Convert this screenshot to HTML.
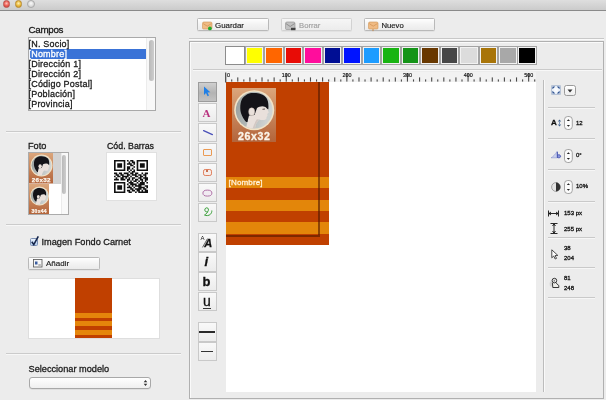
<!DOCTYPE html>
<html><head><meta charset="utf-8">
<style>
*{margin:0;padding:0;box-sizing:border-box}
html,body{width:606px;height:400px;overflow:hidden;background:#ececec;will-change:transform;font-family:"Liberation Sans",sans-serif;color:#1a1a1a}
.a{position:absolute}
.t{position:absolute;white-space:nowrap;line-height:1;-webkit-text-stroke:0.28px currentColor}
.sep{position:absolute;height:2px;border-top:1px solid #cbcbcb;border-bottom:1px solid #f7f7f7}
.btn{position:absolute;border:1px solid #b9b9b9;border-radius:1.5px;background:linear-gradient(#fefefe,#f3f3f3 50%,#ebebeb);box-shadow:0 0.5px 0 #d8d8d8}
.tool{position:absolute;left:197.5px;width:19.5px;height:19.5px;border:1px solid #c9c9c9;background:linear-gradient(#f9f9f9,#ececec)}
.sw{position:absolute;top:46px;width:19.5px;height:19px;border:1px solid #a3a3a3;box-shadow:inset 0 0 0 1px #f2f2f2}
.rsep{position:absolute;left:548px;width:47px;height:2px;border-top:1px solid #c9c9c9;border-bottom:1px solid #f6f6f6}
.step{position:absolute;width:8px;height:13px;border:1px solid #9e9e9e;border-radius:4px;background:#fbfbfb}
.sm{font-size:6px;color:#111;-webkit-text-stroke:0.3px currentColor}
</style></head><body>
<!-- title bar -->
<div class="a" style="left:0;top:0;width:606px;height:11px;background:linear-gradient(#dedede,#cbcbcb);border-bottom:1px solid #8a8a8a"></div>
<div class="a" style="left:2.5px;top:0.2px;width:7.8px;height:7.8px;border-radius:50%;border:0.6px solid #b8504a;background:radial-gradient(circle at 50% 40%,#ffc0b8,#ea5a50 55%,#c8403a)"></div>
<div class="a" style="left:14.5px;top:0.2px;width:7.8px;height:7.8px;border-radius:50%;border:0.6px solid #b88a30;background:radial-gradient(circle at 50% 40%,#fff0b0,#e8b83a 55%,#c89020)"></div>
<div class="a" style="left:26.8px;top:0.2px;width:7.8px;height:7.8px;border-radius:50%;border:0.6px solid #a8a8a8;background:radial-gradient(circle at 50% 40%,#fafafa,#dcdcdc 55%,#c6c6c6)"></div>

<!-- LEFT PANEL -->
<div class="t" style="left:28.6px;top:25.4px;font-size:9.8px;letter-spacing:-0.32px">Campos</div>
<div class="a" style="left:28px;top:37px;width:128px;height:74px;border:1px solid #a9a9a9;background:#fff;overflow:hidden">
  <div class="a" style="left:0;top:11px;width:117px;height:10px;background:#3a73d7"></div>
  <div class="t" style="left:-0.5px;top:0.6px;font-size:9px;line-height:10px;letter-spacing:0.2px">[N. Socio]<br><span style="color:#fff">[Nombre]</span><br>[Dirección 1]<br>[Dirección 2]<br>[Código Postal]<br>[Población]<br>[Provincia]</div>
  <div class="a" style="left:117px;top:0;width:9px;height:72px;background:#f8f8f8;border-left:1px solid #ececec"></div>
  <div class="a" style="left:119.5px;top:1.5px;width:5px;height:41px;border-radius:2.5px;background:linear-gradient(90deg,#b9b9b9,#cdcdcd)"></div>
</div>
<div class="sep" style="left:6px;top:131px;width:175px"></div>

<div class="t" style="left:28px;top:141.5px;font-size:9.2px">Foto</div>
<div class="t" style="left:107px;top:141.5px;font-size:8.8px">Cód. Barras</div>
<div class="a" style="left:27.5px;top:152px;width:41.5px;height:63px;border:1px solid #ababab;background:#fff;overflow:hidden">
  <div class="a" style="left:24.5px;top:0;width:7.5px;height:30.5px;background:#d3d3d3"></div>
  <svg class="a" style="left:0;top:0" width="24.5" height="30.5" viewBox="0 0 24.5 30.5"><use href="#photo"/></svg>
  <svg class="a" style="left:0;top:30.5px" width="20.5" height="30.5" viewBox="0 0 20.5 30.5"><use href="#photo2"/></svg>
  <div class="a" style="left:32px;top:0;width:7.5px;height:63px;background:#f9f9f9;border-left:1px solid #ebebeb"></div>
  <div class="a" style="left:33.2px;top:2px;width:4.8px;height:39px;border-radius:2.4px;background:linear-gradient(90deg,#b9b9b9,#cdcdcd)"></div>
</div>
<div class="a" style="left:106px;top:152px;width:50.5px;height:49px;background:#fff;border:1px solid #e0e0e0"></div>
<svg class="a" style="left:114px;top:160px" width="34" height="33" viewBox="0 0 21 21" preserveAspectRatio="none"><path d="M0 0h1v1h-1zM1 0h1v1h-1zM2 0h1v1h-1zM3 0h1v1h-1zM4 0h1v1h-1zM5 0h1v1h-1zM6 0h1v1h-1zM8 0h1v1h-1zM10 0h1v1h-1zM11 0h1v1h-1zM14 0h1v1h-1zM15 0h1v1h-1zM16 0h1v1h-1zM17 0h1v1h-1zM18 0h1v1h-1zM19 0h1v1h-1zM20 0h1v1h-1zM0 1h1v1h-1zM6 1h1v1h-1zM9 1h1v1h-1zM11 1h1v1h-1zM12 1h1v1h-1zM14 1h1v1h-1zM20 1h1v1h-1zM0 2h1v1h-1zM2 2h1v1h-1zM3 2h1v1h-1zM4 2h1v1h-1zM6 2h1v1h-1zM8 2h1v1h-1zM9 2h1v1h-1zM10 2h1v1h-1zM12 2h1v1h-1zM14 2h1v1h-1zM16 2h1v1h-1zM17 2h1v1h-1zM18 2h1v1h-1zM20 2h1v1h-1zM0 3h1v1h-1zM2 3h1v1h-1zM3 3h1v1h-1zM4 3h1v1h-1zM6 3h1v1h-1zM10 3h1v1h-1zM11 3h1v1h-1zM14 3h1v1h-1zM16 3h1v1h-1zM17 3h1v1h-1zM18 3h1v1h-1zM20 3h1v1h-1zM0 4h1v1h-1zM2 4h1v1h-1zM3 4h1v1h-1zM4 4h1v1h-1zM6 4h1v1h-1zM8 4h1v1h-1zM9 4h1v1h-1zM12 4h1v1h-1zM14 4h1v1h-1zM16 4h1v1h-1zM17 4h1v1h-1zM18 4h1v1h-1zM20 4h1v1h-1zM0 5h1v1h-1zM6 5h1v1h-1zM8 5h1v1h-1zM9 5h1v1h-1zM11 5h1v1h-1zM14 5h1v1h-1zM20 5h1v1h-1zM0 6h1v1h-1zM1 6h1v1h-1zM2 6h1v1h-1zM3 6h1v1h-1zM4 6h1v1h-1zM5 6h1v1h-1zM6 6h1v1h-1zM8 6h1v1h-1zM10 6h1v1h-1zM12 6h1v1h-1zM14 6h1v1h-1zM15 6h1v1h-1zM16 6h1v1h-1zM17 6h1v1h-1zM18 6h1v1h-1zM19 6h1v1h-1zM20 6h1v1h-1zM9 7h1v1h-1zM11 7h1v1h-1zM12 7h1v1h-1zM0 8h1v1h-1zM1 8h1v1h-1zM3 8h1v1h-1zM4 8h1v1h-1zM6 8h1v1h-1zM7 8h1v1h-1zM8 8h1v1h-1zM10 8h1v1h-1zM11 8h1v1h-1zM13 8h1v1h-1zM14 8h1v1h-1zM17 8h1v1h-1zM19 8h1v1h-1zM20 8h1v1h-1zM1 9h1v1h-1zM2 9h1v1h-1zM4 9h1v1h-1zM5 9h1v1h-1zM8 9h1v1h-1zM9 9h1v1h-1zM11 9h1v1h-1zM12 9h1v1h-1zM13 9h1v1h-1zM15 9h1v1h-1zM16 9h1v1h-1zM18 9h1v1h-1zM19 9h1v1h-1zM0 10h1v1h-1zM2 10h1v1h-1zM3 10h1v1h-1zM5 10h1v1h-1zM6 10h1v1h-1zM7 10h1v1h-1zM8 10h1v1h-1zM10 10h1v1h-1zM13 10h1v1h-1zM14 10h1v1h-1zM16 10h1v1h-1zM17 10h1v1h-1zM19 10h1v1h-1zM1 11h1v1h-1zM4 11h1v1h-1zM5 11h1v1h-1zM7 11h1v1h-1zM9 11h1v1h-1zM11 11h1v1h-1zM12 11h1v1h-1zM15 11h1v1h-1zM16 11h1v1h-1zM18 11h1v1h-1zM19 11h1v1h-1zM20 11h1v1h-1zM0 12h1v1h-1zM1 12h1v1h-1zM2 12h1v1h-1zM4 12h1v1h-1zM5 12h1v1h-1zM6 12h1v1h-1zM8 12h1v1h-1zM9 12h1v1h-1zM11 12h1v1h-1zM13 12h1v1h-1zM14 12h1v1h-1zM16 12h1v1h-1zM17 12h1v1h-1zM19 12h1v1h-1zM20 12h1v1h-1zM8 13h1v1h-1zM10 13h1v1h-1zM12 13h1v1h-1zM13 13h1v1h-1zM15 13h1v1h-1zM17 13h1v1h-1zM19 13h1v1h-1zM0 14h1v1h-1zM1 14h1v1h-1zM2 14h1v1h-1zM3 14h1v1h-1zM4 14h1v1h-1zM5 14h1v1h-1zM6 14h1v1h-1zM9 14h1v1h-1zM10 14h1v1h-1zM11 14h1v1h-1zM14 14h1v1h-1zM16 14h1v1h-1zM17 14h1v1h-1zM18 14h1v1h-1zM20 14h1v1h-1zM0 15h1v1h-1zM6 15h1v1h-1zM8 15h1v1h-1zM10 15h1v1h-1zM11 15h1v1h-1zM12 15h1v1h-1zM13 15h1v1h-1zM15 15h1v1h-1zM16 15h1v1h-1zM17 15h1v1h-1zM18 15h1v1h-1zM0 16h1v1h-1zM2 16h1v1h-1zM3 16h1v1h-1zM4 16h1v1h-1zM6 16h1v1h-1zM9 16h1v1h-1zM11 16h1v1h-1zM13 16h1v1h-1zM14 16h1v1h-1zM15 16h1v1h-1zM16 16h1v1h-1zM19 16h1v1h-1zM20 16h1v1h-1zM0 17h1v1h-1zM2 17h1v1h-1zM3 17h1v1h-1zM4 17h1v1h-1zM6 17h1v1h-1zM8 17h1v1h-1zM9 17h1v1h-1zM10 17h1v1h-1zM12 17h1v1h-1zM15 17h1v1h-1zM16 17h1v1h-1zM17 17h1v1h-1zM18 17h1v1h-1zM20 17h1v1h-1zM0 18h1v1h-1zM2 18h1v1h-1zM3 18h1v1h-1zM4 18h1v1h-1zM6 18h1v1h-1zM10 18h1v1h-1zM11 18h1v1h-1zM13 18h1v1h-1zM14 18h1v1h-1zM15 18h1v1h-1zM16 18h1v1h-1zM18 18h1v1h-1zM19 18h1v1h-1zM0 19h1v1h-1zM6 19h1v1h-1zM8 19h1v1h-1zM9 19h1v1h-1zM11 19h1v1h-1zM12 19h1v1h-1zM14 19h1v1h-1zM15 19h1v1h-1zM17 19h1v1h-1zM19 19h1v1h-1zM20 19h1v1h-1zM0 20h1v1h-1zM1 20h1v1h-1zM2 20h1v1h-1zM3 20h1v1h-1zM4 20h1v1h-1zM5 20h1v1h-1zM6 20h1v1h-1zM9 20h1v1h-1zM10 20h1v1h-1zM13 20h1v1h-1zM15 20h1v1h-1zM16 20h1v1h-1zM17 20h1v1h-1zM18 20h1v1h-1zM19 20h1v1h-1zM20 20h1v1h-1z" fill="#111"/></svg>

<div class="sep" style="left:6px;top:223.5px;width:175px"></div>
<div class="a" style="left:29.8px;top:238px;width:8.5px;height:8px;border:1px solid #7c90b4;border-radius:1.5px;background:linear-gradient(#eaf2fc,#b2cdef)"></div>
<svg class="a" style="left:30px;top:234.5px" width="11" height="12" viewBox="0 0 11 12"><path d="M1.8 6.8 L3.8 9.6 L8.3 1.4" fill="none" stroke="#15254a" stroke-width="1.6"/></svg>
<div class="t" style="left:41.5px;top:237.5px;font-size:9.2px">Imagen Fondo Carnet</div>
<div class="btn" style="left:28px;top:256.5px;width:72px;height:13.5px"></div>
<svg class="a" style="left:32.5px;top:258.5px" width="10" height="9" viewBox="0 0 10 9"><rect x="0.5" y="0.5" width="8.5" height="7.5" fill="#f6f6f6" stroke="#555" stroke-width="0.8"/><rect x="2" y="2.5" width="2.5" height="3" fill="#3c5ea0"/><rect x="5.3" y="5.5" width="2.5" height="1" fill="#777"/></svg>
<div class="t" style="left:46px;top:259.5px;-webkit-text-stroke:0.15px;font-size:8px">Añadir</div>
<div class="a" style="left:27.5px;top:277.5px;width:132.5px;height:61.5px;background:#fff;border:1px solid #dedede"></div>
<div class="a" style="left:74.5px;top:278px;width:37.5px;height:60px;background:#c04000"></div>
<div class="a" style="left:74.5px;top:313px;width:37.5px;height:5px;background:#e5860b"></div>
<div class="a" style="left:74.5px;top:321px;width:37.5px;height:5px;background:#e5860b"></div>
<div class="a" style="left:74.5px;top:329.5px;width:37.5px;height:5px;background:#e5860b"></div>

<div class="sep" style="left:6px;top:352.5px;width:175px"></div>
<div class="t" style="left:28.5px;top:364.5px;font-size:9.2px">Seleccionar modelo</div>
<div class="a" style="left:28.5px;top:377px;width:122px;height:12px;border:1px solid #a8a8a8;border-radius:3px;background:linear-gradient(#fefefe,#efefef);box-shadow:0 0.5px 0 #d0d0d0"></div>
<svg class="a" style="left:142.5px;top:379px" width="5" height="8" viewBox="0 0 5 8"><path d="M0.7 3.2 L2.5 1 L4.3 3.2 Z M0.7 4.8 L2.5 7 L4.3 4.8 Z" fill="#333"/></svg>

<!-- TOP BUTTONS -->
<div class="btn" style="left:197px;top:18.4px;width:72px;height:13px"></div>
<div class="t" style="left:215px;top:21.8px;-webkit-text-stroke:0.15px;font-size:7.9px">Guardar</div>
<div class="btn" style="left:280.5px;top:18.4px;width:71.5px;height:13px;border-color:#d2d2d2;background:linear-gradient(#f6f6f6,#ececec)"></div>
<div class="t" style="left:299px;top:21.8px;-webkit-text-stroke:0.15px;font-size:7.7px;color:#a0a0a0">Borrar</div>
<div class="btn" style="left:363.5px;top:18.4px;width:71px;height:13px"></div>
<div class="t" style="left:381.5px;top:21.8px;-webkit-text-stroke:0.15px;font-size:7.7px">Nuevo</div>
<!-- button icons -->
<svg class="a" style="left:201.5px;top:20.5px" width="12" height="11" viewBox="0 0 12 11"><path d="M0.5 2.3 Q0.5 1 2 1 L8.5 1 Q10 1 10 2.3 L10 7 Q10 8 9 8 L1.5 8 Q0.5 8 0.5 7Z" fill="#f0bb84" stroke="#cf9558" stroke-width="0.6"/><path d="M1.2 2.6 L5.2 5.2 L9.4 2.6" fill="none" stroke="#c98a4a" stroke-width="0.6"/><circle cx="7.9" cy="7.4" r="1.9" fill="#22a82c"/></svg>
<svg class="a" style="left:285px;top:20.5px" width="12" height="11" viewBox="0 0 12 11"><path d="M0.5 2.5 Q0.5 1 2 1 L8.5 1 Q10 1 10 2.5 L10 7.5 Q10 8.5 9 8.5 L1.5 8.5 Q0.5 8.5 0.5 7.5Z" fill="#c2c2c2" stroke="#8e8e8e" stroke-width="0.6"/><path d="M0.8 2.5 L5.2 5.5 L9.7 2.5" fill="none" stroke="#7a7a7a" stroke-width="0.7"/><rect x="6" y="6.8" width="4.5" height="2.4" fill="#444"/></svg>
<svg class="a" style="left:367.5px;top:20.5px" width="12" height="12" viewBox="0 0 12 12"><path d="M0.5 2.3 Q0.5 1 2 1 L8.5 1 Q10 1 10 2.3 L10 7 Q10 8 9 8 L1.5 8 Q0.5 8 0.5 7Z" fill="#f0bb84" stroke="#cf9558" stroke-width="0.6"/><path d="M1.2 2.6 L5.2 5.2 L9.4 2.6" fill="none" stroke="#c98a4a" stroke-width="0.6"/><path d="M4 8.5 L5 10.5 L6 8.5Z" fill="#c18548"/></svg>

<!-- FRAME -->
<div class="a" style="left:189px;top:38px;width:415px;height:2px;border-top:1px solid #c8c8c8;border-bottom:1px solid #fafafa"></div>
<div class="a" style="left:189px;top:40.5px;width:415px;height:358.5px;border:1px solid #b0b0b0;background:#ececec;box-shadow:inset 1px 1px 0 #fafafa"></div>
<div class="a" style="left:193px;top:69px;width:409px;height:2px;border-top:1px solid #cacaca;border-bottom:1px solid #f8f8f8"></div>

<!-- swatches -->
<div class="sw" style="left:225px;background:#fff;border:1.5px solid #8c8c8c;box-shadow:none"></div>
<div class="sw" style="left:244.7px;background:#ffff00"></div>
<div class="sw" style="left:264.2px;background:#ff6600"></div>
<div class="sw" style="left:283.7px;background:#e80c06"></div>
<div class="sw" style="left:303.2px;background:#ff0d9c"></div>
<div class="sw" style="left:322.7px;background:#000e94"></div>
<div class="sw" style="left:342.2px;background:#0014ff"></div>
<div class="sw" style="left:361.7px;background:#1c9cff"></div>
<div class="sw" style="left:381.2px;background:#18b412"></div>
<div class="sw" style="left:400.7px;background:#149418"></div>
<div class="sw" style="left:420.2px;background:#683800"></div>
<div class="sw" style="left:439.7px;background:#474747"></div>
<div class="sw" style="left:459.2px;background:#dcdcdc"></div>
<div class="sw" style="left:478.7px;background:#a87408"></div>
<div class="sw" style="left:498.2px;background:#a8a8a8"></div>
<div class="sw" style="left:517.2px;background:#000"></div>

<!-- ruler -->
<div class="a" style="left:225px;top:72px;width:311px;height:10px;background:#f2f2f2"></div>
<svg class="a" style="left:225px;top:71.5px" width="312" height="11" viewBox="0 0 312 11">
<rect x="0.1" y="0.5" width="1.2" height="10" fill="#444"/>
<rect x="6.16" y="7.40" width="1.1" height="2.20" fill="#4a4a4a"/>
<rect x="12.22" y="5.40" width="1.1" height="4.20" fill="#4a4a4a"/>
<rect x="18.28" y="7.40" width="1.1" height="2.20" fill="#4a4a4a"/>
<rect x="24.34" y="5.40" width="1.1" height="4.20" fill="#4a4a4a"/>
<rect x="30.40" y="7.40" width="1.1" height="2.20" fill="#4a4a4a"/>
<rect x="36.46" y="5.40" width="1.1" height="4.20" fill="#4a4a4a"/>
<rect x="42.52" y="7.40" width="1.1" height="2.20" fill="#4a4a4a"/>
<rect x="48.58" y="5.40" width="1.1" height="4.20" fill="#4a4a4a"/>
<rect x="54.64" y="7.40" width="1.1" height="2.20" fill="#4a4a4a"/>
<rect x="60.70" y="1.10" width="1.1" height="8.50" fill="#4a4a4a"/>
<text x="61.35" y="4.9" font-family="Liberation Sans" font-size="5.4" fill="#111" text-anchor="middle" stroke="#111" stroke-width="0.15">100</text>
<rect x="66.76" y="7.40" width="1.1" height="2.20" fill="#4a4a4a"/>
<rect x="72.82" y="5.40" width="1.1" height="4.20" fill="#4a4a4a"/>
<rect x="78.88" y="7.40" width="1.1" height="2.20" fill="#4a4a4a"/>
<rect x="84.94" y="5.40" width="1.1" height="4.20" fill="#4a4a4a"/>
<rect x="91.00" y="7.40" width="1.1" height="2.20" fill="#4a4a4a"/>
<rect x="97.06" y="5.40" width="1.1" height="4.20" fill="#4a4a4a"/>
<rect x="103.12" y="7.40" width="1.1" height="2.20" fill="#4a4a4a"/>
<rect x="109.18" y="5.40" width="1.1" height="4.20" fill="#4a4a4a"/>
<rect x="115.24" y="7.40" width="1.1" height="2.20" fill="#4a4a4a"/>
<rect x="121.30" y="1.10" width="1.1" height="8.50" fill="#4a4a4a"/>
<text x="121.95" y="4.9" font-family="Liberation Sans" font-size="5.4" fill="#111" text-anchor="middle" stroke="#111" stroke-width="0.15">200</text>
<rect x="127.36" y="7.40" width="1.1" height="2.20" fill="#4a4a4a"/>
<rect x="133.42" y="5.40" width="1.1" height="4.20" fill="#4a4a4a"/>
<rect x="139.48" y="7.40" width="1.1" height="2.20" fill="#4a4a4a"/>
<rect x="145.54" y="5.40" width="1.1" height="4.20" fill="#4a4a4a"/>
<rect x="151.60" y="7.40" width="1.1" height="2.20" fill="#4a4a4a"/>
<rect x="157.66" y="5.40" width="1.1" height="4.20" fill="#4a4a4a"/>
<rect x="163.72" y="7.40" width="1.1" height="2.20" fill="#4a4a4a"/>
<rect x="169.78" y="5.40" width="1.1" height="4.20" fill="#4a4a4a"/>
<rect x="175.84" y="7.40" width="1.1" height="2.20" fill="#4a4a4a"/>
<rect x="181.90" y="1.10" width="1.1" height="8.50" fill="#4a4a4a"/>
<text x="182.55" y="4.9" font-family="Liberation Sans" font-size="5.4" fill="#111" text-anchor="middle" stroke="#111" stroke-width="0.15">300</text>
<rect x="187.96" y="7.40" width="1.1" height="2.20" fill="#4a4a4a"/>
<rect x="194.02" y="5.40" width="1.1" height="4.20" fill="#4a4a4a"/>
<rect x="200.08" y="7.40" width="1.1" height="2.20" fill="#4a4a4a"/>
<rect x="206.14" y="5.40" width="1.1" height="4.20" fill="#4a4a4a"/>
<rect x="212.20" y="7.40" width="1.1" height="2.20" fill="#4a4a4a"/>
<rect x="218.26" y="5.40" width="1.1" height="4.20" fill="#4a4a4a"/>
<rect x="224.32" y="7.40" width="1.1" height="2.20" fill="#4a4a4a"/>
<rect x="230.38" y="5.40" width="1.1" height="4.20" fill="#4a4a4a"/>
<rect x="236.44" y="7.40" width="1.1" height="2.20" fill="#4a4a4a"/>
<rect x="242.50" y="1.10" width="1.1" height="8.50" fill="#4a4a4a"/>
<text x="243.15" y="4.9" font-family="Liberation Sans" font-size="5.4" fill="#111" text-anchor="middle" stroke="#111" stroke-width="0.15">400</text>
<rect x="248.56" y="7.40" width="1.1" height="2.20" fill="#4a4a4a"/>
<rect x="254.62" y="5.40" width="1.1" height="4.20" fill="#4a4a4a"/>
<rect x="260.68" y="7.40" width="1.1" height="2.20" fill="#4a4a4a"/>
<rect x="266.74" y="5.40" width="1.1" height="4.20" fill="#4a4a4a"/>
<rect x="272.80" y="7.40" width="1.1" height="2.20" fill="#4a4a4a"/>
<rect x="278.86" y="5.40" width="1.1" height="4.20" fill="#4a4a4a"/>
<rect x="284.92" y="7.40" width="1.1" height="2.20" fill="#4a4a4a"/>
<rect x="290.98" y="5.40" width="1.1" height="4.20" fill="#4a4a4a"/>
<rect x="297.04" y="7.40" width="1.1" height="2.20" fill="#4a4a4a"/>
<rect x="303.10" y="1.10" width="1.1" height="8.50" fill="#4a4a4a"/>
<text x="303.75" y="4.9" font-family="Liberation Sans" font-size="5.4" fill="#111" text-anchor="middle" stroke="#111" stroke-width="0.15">500</text>
<rect x="309.16" y="7.40" width="1.1" height="2.20" fill="#4a4a4a"/>
<text x="2.1" y="4.9" font-family="Liberation Sans" font-size="5.4" fill="#111" stroke="#111" stroke-width="0.15">0</text>
</svg>

<!-- canvas -->
<div class="a" style="left:226px;top:82px;width:310px;height:310px;background:#fff"></div>
<div class="a" style="left:226px;top:81.5px;width:103px;height:163px;background:#c04000"></div>
<div class="a" style="left:226px;top:177px;width:103px;height:11.4px;background:#e3860a"></div>
<div class="a" style="left:226px;top:199.7px;width:103px;height:11.4px;background:#e3860a"></div>
<div class="a" style="left:226px;top:222.4px;width:103px;height:11.4px;background:#e3860a"></div>
<div class="a" style="left:317.9px;top:81.5px;width:1.8px;height:155.4px;background:rgba(80,25,0,0.6)"></div>
<div class="a" style="left:226px;top:235px;width:91.9px;height:1.9px;background:rgba(80,25,0,0.6)"></div>
<svg class="a" style="left:232px;top:88px" width="44" height="54" viewBox="0 0 44 54"><use href="#photoBig"/></svg>
<div class="t" style="left:228.6px;top:178.8px;font-size:8px;letter-spacing:0.15px;color:#fff2da">[Nombre]</div>

<!-- tools -->
<div class="tool" style="top:82px;background:linear-gradient(#cfcfcf,#b3b3b3 55%,#c2c2c2);border-color:#9c9c9c"></div>
<div class="tool" style="top:102.5px"></div>
<div class="tool" style="top:122.5px"></div>
<div class="tool" style="top:142.5px"></div>
<div class="tool" style="top:162.5px"></div>
<div class="tool" style="top:182.5px"></div>
<div class="tool" style="top:202.5px"></div>
<div class="tool" style="top:232.5px"></div>
<div class="tool" style="top:252.3px"></div>
<div class="tool" style="top:271.8px"></div>
<div class="tool" style="top:291.8px"></div>
<div class="tool" style="top:322px"></div>
<div class="tool" style="top:341.5px"></div>
<!-- tool icons -->
<svg class="a" style="left:203px;top:86px" width="8" height="11" viewBox="0 0 8 11"><path d="M1 0.5 L1 9 L3 7 L4.6 10.3 L6 9.6 L4.5 6.4 L7.3 6.2 Z" fill="#1f7fe6"/></svg>
<div class="t" style="left:202.5px;top:107.5px;font-size:11px;font-family:'Liberation Serif',serif;font-weight:bold;color:#b8307e;-webkit-text-stroke:0">A</div>
<svg class="a" style="left:201px;top:125px" width="14" height="12" viewBox="0 0 14 12"><path d="M2.6 5.6 L11.4 9.6" stroke="#4a50b8" stroke-width="1.3" stroke-linecap="round"/></svg>
<div class="a" style="left:202.7px;top:148.8px;width:9.5px;height:7px;border:1.1px solid #eb9a52;border-radius:1px;background:#eef0f4"></div>
<div class="a" style="left:202.7px;top:168.5px;width:9px;height:7px;border:1px solid #e0805e;border-radius:2.2px;background:#f6ece8"></div><div class="a" style="left:206.2px;top:170px;width:2px;height:2px;border:0.6px solid #c87050"></div>
<svg class="a" style="left:201px;top:187.5px" width="12" height="10" viewBox="0 0 12 10"><ellipse cx="6.4" cy="5.1" rx="4.5" ry="3" fill="#f1ebf2" stroke="#a8649f" stroke-width="0.9"/></svg>
<svg class="a" style="left:201px;top:205px" width="13" height="13" viewBox="0 0 13 13"><path d="M6.8 6.5 C8 5 7.5 2.8 5.8 2.8 C4 2.8 3.2 5 4.3 6.3 C5.2 7.3 6.8 6.8 6.8 6.5 C6.2 8.5 4.2 9.5 3.5 10 C5 11 8 10.8 9.5 9.2 C10.5 8.2 11 6.5 10.8 5.5" fill="none" stroke="#3aa03a" stroke-width="1"/></svg>
<!-- text tools -->
<div class="t" style="left:200.4px;top:235.3px;font-size:6px;color:#111;-webkit-text-stroke:0">A</div>
<svg class="a" style="left:201px;top:237px" width="8" height="12" viewBox="0 0 8 12"><path d="M1.5 10.4 L6.5 1.6" stroke="#222" stroke-width="0.7"/></svg>
<div class="t" style="left:204.3px;top:237.8px;font-size:11px;font-weight:bold;font-style:italic;color:#111">A</div>
<div class="t" style="left:204.6px;top:255.1px;font-size:13px;font-weight:bold;font-style:italic;color:#111">i</div>
<div class="t" style="left:202.6px;top:274.5px;font-size:13px;font-weight:bold;color:#111">b</div>
<div class="t" style="left:203.1px;top:294.3px;font-size:14px;color:#111">u</div>
<div class="a" style="left:203px;top:307.8px;width:8.3px;height:1px;background:#333"></div>
<div class="a" style="left:199px;top:331px;width:16px;height:1.7px;background:#2a2a2a"></div>
<div class="a" style="left:201px;top:351px;width:12px;height:1.2px;background:#333"></div>

<!-- right panel -->
<div class="a" style="left:543px;top:80px;width:2px;height:312px;border-left:1px solid #bcbcbc;border-right:1px solid #f9f9f9"></div>
<svg class="a" style="left:550.7px;top:85.2px" width="10" height="10" viewBox="0 0 10 10"><rect x="0.4" y="0.4" width="9.2" height="9.2" rx="0.8" fill="#eef3fa" stroke="#9fb0c8" stroke-width="0.8"/><path d="M3.4 3.4 L6.6 6.6 M6.6 3.4 L3.4 6.6" stroke="#fafcff" stroke-width="1.6"/><path d="M1.4 1.4 h2.9 l-2.9 2.9z M8.6 1.4 h-2.9 l2.9 2.9z M1.4 8.6 h2.9 l-2.9 -2.9z M8.6 8.6 h-2.9 l2.9 -2.9z" fill="#2b4f8e"/></svg>
<div class="a" style="left:564px;top:85px;width:11.5px;height:11px;border:1px solid #9a9a9a;border-radius:2.5px;background:linear-gradient(#fff,#eee)"></div>
<svg class="a" style="left:567px;top:88.5px" width="6" height="4" viewBox="0 0 6 4"><path d="M0.5 0.5 L5.5 0.5 L3 3.5Z" fill="#333"/></svg>
<div class="rsep" style="top:107px"></div>
<div class="t" style="left:551px;top:118.6px;font-size:8px;font-weight:bold;color:#111">A</div>
<svg class="a" style="left:557px;top:119px" width="5" height="8" viewBox="0 0 5 8"><path d="M2.5 0.4 L4.2 2.6 L0.8 2.6Z M2.5 7.6 L4.2 5.4 L0.8 5.4Z" fill="#3e5f8c"/><rect x="2" y="2.4" width="1" height="3.2" fill="#7e96b8"/></svg>
<svg class="a" style="left:564px;top:116px" width="9" height="14" viewBox="0 0 9 14"><rect x="0.5" y="0.5" width="7.8" height="13" rx="3.2" fill="#fbfbfb" stroke="#8f8f8f" stroke-width="0.8"/><path d="M2.8 5 L4.4 3.2 L6 5Z M2.8 9 L4.4 10.8 L6 9Z" fill="#222"/></svg>
<div class="t sm" style="left:576px;top:119.7px">12</div>
<div class="rsep" style="top:138px"></div>
<svg class="a" style="left:550px;top:150px" width="12" height="9" viewBox="0 0 12 9"><path d="M1 7.8 C3 7 5.5 4 7 1.5 L7.3 7.8 Z" fill="#c9d0ec" stroke="#7f88c8" stroke-width="0.5"/><path d="M7.4 1.8 V7.8 M7.4 5.2 C8.8 4.2 10.6 5 10.6 6.4 C10.6 7.6 9 8.1 7.4 7.5" fill="#8a95dc" stroke="#3f4fae" stroke-width="0.9"/></svg>
<svg class="a" style="left:564px;top:148.5px" width="9" height="14" viewBox="0 0 9 14"><rect x="0.5" y="0.5" width="7.8" height="13" rx="3.2" fill="#fbfbfb" stroke="#8f8f8f" stroke-width="0.8"/><path d="M2.8 5 L4.4 3.2 L6 5Z M2.8 9 L4.4 10.8 L6 9Z" fill="#222"/></svg>
<div class="t sm" style="left:576px;top:151.7px">0°</div>
<div class="rsep" style="top:169px"></div>
<svg class="a" style="left:551px;top:181.5px" width="10" height="10" viewBox="0 0 10 10"><circle cx="5" cy="5" r="4.4" fill="#e4e4e4" stroke="#777" stroke-width="0.6"/><path d="M5 0.6 A4.4 4.4 0 0 1 5 9.4 Z" fill="#333"/></svg>
<svg class="a" style="left:564px;top:180px" width="9" height="14" viewBox="0 0 9 14"><rect x="0.5" y="0.5" width="7.8" height="13" rx="3.2" fill="#fbfbfb" stroke="#8f8f8f" stroke-width="0.8"/><path d="M2.8 5 L4.4 3.2 L6 5Z M2.8 9 L4.4 10.8 L6 9Z" fill="#222"/></svg>
<div class="t sm" style="left:576px;top:182.7px">10%</div>
<div class="rsep" style="top:201px"></div>
<svg class="a" style="left:548px;top:210px" width="11" height="7" viewBox="0 0 11 7"><path d="M0.5 0.5 V6.5 M10.5 0.5 V6.5 M1 3.5 H10 M1 3.5 L3 2 M1 3.5 L3 5 M10 3.5 L8 2 M10 3.5 L8 5" fill="none" stroke="#111" stroke-width="0.9"/></svg>
<div class="t sm" style="left:564px;top:210.2px">153 px</div>
<svg class="a" style="left:549.5px;top:223px" width="8" height="11" viewBox="0 0 8 11"><path d="M0.5 0.5 H7.5 M0.5 10.5 H7.5 M4 1 V10 M4 1 L2.5 3 M4 1 L5.5 3 M4 10 L2.5 8 M4 10 L5.5 8" fill="none" stroke="#111" stroke-width="0.9"/></svg>
<div class="t sm" style="left:564px;top:225.7px">255 px</div>
<div class="rsep" style="top:237px"></div>
<svg class="a" style="left:550.5px;top:248.5px" width="8" height="11" viewBox="0 0 8 11"><path d="M0.8 0.8 L0.8 8.8 L2.7 7 L4.2 10 L5.5 9.4 L4.1 6.5 L6.8 6.4 Z" fill="#fff" stroke="#222" stroke-width="0.8" stroke-linejoin="round"/></svg>
<div class="t sm" style="left:564px;top:245.2px">38</div>
<div class="t sm" style="left:564px;top:255.2px">204</div>
<div class="rsep" style="top:267px"></div>
<svg class="a" style="left:548px;top:276px" width="12" height="13" viewBox="0 0 12 13"><ellipse cx="3" cy="8" rx="1.4" ry="2.8" fill="#d4d4d4"/><path d="M4.4 6.8 L4.8 11.5 L10.8 11.5 L10.8 9.5 L8.6 7.6 L8.2 6.6" fill="#eeeeea" stroke="#222" stroke-width="0.9"/><circle cx="6.4" cy="4.6" r="2.3" fill="#efefef" stroke="#222" stroke-width="0.9"/><rect x="5.6" y="3.8" width="1.4" height="1.8" fill="#888"/></svg>
<div class="t sm" style="left:564px;top:275.2px">81</div>
<div class="t sm" style="left:564px;top:285.2px">248</div>
<div class="rsep" style="top:297px"></div>

<!-- defs -->
<svg width="0" height="0" style="position:absolute">
<defs>
 <linearGradient id="pg" x1="0" y1="0" x2="0" y2="1"><stop offset="0" stop-color="#dba67c"/><stop offset="1" stop-color="#b3643a"/></linearGradient>
 <linearGradient id="cg" x1="0" y1="0" x2="1" y2="0.3"><stop offset="0" stop-color="#949c9b"/><stop offset="1" stop-color="#cfd3d2"/></linearGradient>
 <clipPath id="cc1"><circle cx="22.2" cy="22.2" r="18.4"/></clipPath>
 <g id="photoBig">
  <rect x="0" y="0" width="44" height="54" fill="url(#pg)"/>
  <circle cx="22.2" cy="22.2" r="20" fill="#f1e2c6"/>
  <circle cx="22.2" cy="22.2" r="18.4" fill="url(#cg)"/>
  <g clip-path="url(#cc1)">
   <path d="M25 20 C27 18.8 30 17.5 33.5 19 L35.5 21 C36 22.5 36.3 23.5 36.8 24.4 L35.2 26 L35.6 27.5 L34.6 29 L34.4 31 L32.5 32 C30.5 32.2 28.5 32 27 31.5 L24 36 L22 44 L13 44 L15.5 34 C16 31 16.5 29 17 27.5 L22.5 27 Z" fill="#e9e0db"/><path d="M27 31.5 L24 36 L22 44 L19.5 44 C20.5 40 22.5 35 24.8 31.3 Z" fill="#d2c8c3"/><path d="M30.5 21.3 L33 21" stroke="#3a3030" stroke-width="0.8"/>
   <path d="M14.3 34.1 C11.5 31 8.5 26 8.3 20.9 C8 14 10 9.5 13.2 7.7 C16 5.5 18.5 5 20.9 5 C24 4.8 26.5 5.2 28.6 6 C31.5 7 33.5 8.5 34.6 10.2 C36 12.5 36.8 16 36.3 21.2 L35.5 21 L33.5 19 C30 17.5 27 18.8 25 20 L22.5 27 L17 27.5 C16.5 29 16 31 15.5 34 Z" fill="#141318"/>
   <ellipse cx="19.7" cy="23.7" rx="3.1" ry="3.9" fill="#e9e0da" stroke="#b8aaa2" stroke-width="0.4"/>
  </g>
  <text x="22.2" y="52.4" text-anchor="middle" font-family="Liberation Sans" font-weight="bold" font-size="10.6" fill="#fbf5ea" stroke="#fbf5ea" stroke-width="0.3" letter-spacing="0.6">26x32</text>
 </g>
 <clipPath id="cc2"><circle cx="12.5" cy="12.5" r="10"/></clipPath>
 <g id="photo">
  <rect x="0" y="0" width="24.5" height="30.5" fill="url(#pg)"/>
  <circle cx="12.5" cy="12.5" r="11" fill="#f1e2c6"/>
  <circle cx="12.5" cy="12.5" r="10" fill="url(#cg)"/>
  <g clip-path="url(#cc2)"><g transform="translate(0.44,0.44) scale(0.543)">
   <path d="M25 20 C27 18.8 30 17.5 33.5 19 L35.5 21 C36 22.5 36.3 23.5 36.8 24.4 L35.2 26 L35.6 27.5 L34.6 29 L34.4 31 L32.5 32 C30.5 32.2 28.5 32 27 31.5 L24 36 L22 44 L13 44 L15.5 34 C16 31 16.5 29 17 27.5 L22.5 27 Z" fill="#e9e0db"/>
   <path d="M14.3 34.1 C11.5 31 8.5 26 8.3 20.9 C8 14 10 9.5 13.2 7.7 C16 5.5 18.5 5 20.9 5 C24 4.8 26.5 5.2 28.6 6 C31.5 7 33.5 8.5 34.6 10.2 C36 12.5 36.8 16 36.3 21.2 L35.5 21 L33.5 19 C30 17.5 27 18.8 25 20 L22.5 27 L17 27.5 C16.5 29 16 31 15.5 34 Z" fill="#141318"/>
   <ellipse cx="19.7" cy="23.7" rx="3.1" ry="3.9" fill="#e9e0da"/>
  </g></g>
  <text x="12.3" y="29.1" text-anchor="middle" font-family="Liberation Sans" font-weight="bold" font-size="6.2" fill="#fdf8f0" stroke="#fdf8f0" stroke-width="0.25" letter-spacing="0.35">26x32</text>
 </g>
 <clipPath id="cc3"><circle cx="10.5" cy="12" r="8.6"/></clipPath>
 <g id="photo2">
  <rect x="0" y="0" width="20.5" height="30.5" fill="url(#pg)"/>
  <circle cx="10.5" cy="12" r="9.5" fill="#f1e2c6"/>
  <circle cx="10.5" cy="12" r="8.6" fill="url(#cg)"/>
  <g clip-path="url(#cc3)"><g transform="translate(0.13,1.63) scale(0.467)">
   <path d="M25 20 C27 18.8 30 17.5 33.5 19 L35.5 21 C36 22.5 36.3 23.5 36.8 24.4 L35.2 26 L35.6 27.5 L34.6 29 L34.4 31 L32.5 32 C30.5 32.2 28.5 32 27 31.5 L24 36 L22 44 L13 44 L15.5 34 C16 31 16.5 29 17 27.5 L22.5 27 Z" fill="#e9e0db"/>
   <path d="M14.3 34.1 C11.5 31 8.5 26 8.3 20.9 C8 14 10 9.5 13.2 7.7 C16 5.5 18.5 5 20.9 5 C24 4.8 26.5 5.2 28.6 6 C31.5 7 33.5 8.5 34.6 10.2 C36 12.5 36.8 16 36.3 21.2 L35.5 21 L33.5 19 C30 17.5 27 18.8 25 20 L22.5 27 L17 27.5 C16.5 29 16 31 15.5 34 Z" fill="#141318"/>
   <ellipse cx="19.7" cy="23.7" rx="3.1" ry="3.9" fill="#e9e0da"/>
  </g></g>
  <text x="10.2" y="29" text-anchor="middle" font-family="Liberation Sans" font-weight="bold" font-size="5" fill="#fdf8f0" stroke="#fdf8f0" stroke-width="0.2" letter-spacing="0.3">30x44</text>
 </g>
</defs>
</svg>
</body></html>
